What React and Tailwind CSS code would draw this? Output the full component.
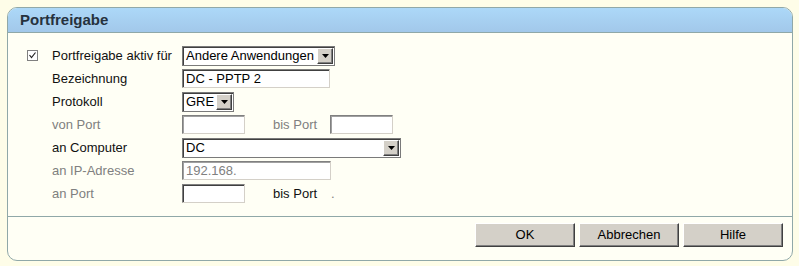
import React from "react";

const font = { fontFamily: '"Liberation Sans", Arial, sans-serif' };

function Arrow() {
  return (
    <div className="w-[16px] h-[16px] bg-[#d4d0c8] border border-t-white border-l-white border-r-[#404040] border-b-[#404040] shadow-[inset_-1px_-1px_0_#808080] flex items-center justify-center shrink-0">
      <svg width="7" height="4" viewBox="0 0 7 4">
        <polygon points="0,0 7,0 3.5,4" fill="#000" />
      </svg>
    </div>
  );
}

function Select({ value, width }) {
  return (
    <div
      className={`h-[20px] ${width} border border-[#7a7a7a] shadow-[inset_1px_1px_0_#404040] bg-white flex items-center pl-[3px] pr-[1px]`}
    >
      <span className="flex-1 text-[13px] text-black leading-none whitespace-nowrap">{value}</span>
      <Arrow />
    </div>
  );
}

function Input({ value, width, gray }) {
  return (
    <div
      className={`h-[19px] ${width} bg-white border border-t-[#808080] border-l-[#808080] border-r-[#d4d0c8] border-b-[#d4d0c8] ${
        gray ? "shadow-[inset_1px_1px_0_#a0a0a0]" : "shadow-[inset_1px_1px_0_#404040]"
      } flex items-center pl-[3px]`}
    >
      <span className={`text-[13px] leading-none whitespace-nowrap ${gray ? "text-[#808080]" : "text-black"}`}>{value}</span>
    </div>
  );
}

function Row({ label, disabled, children, check }) {
  return (
    <div className="h-[23px] flex items-center">
      <div className="w-[44px] pl-[19px] flex items-center">
        {check && (
          <svg width="11" height="11" viewBox="0 0 11 11">
            <rect x="0.5" y="0.5" width="10" height="10" fill="#fff" stroke="#808080" />
            <polyline points="2.5,5 4.5,7.5 8.5,2.5" fill="none" stroke="#222" strokeWidth="1.2" />
          </svg>
        )}
      </div>
      <div className={`w-[130px] text-[13px] ${disabled ? "text-[#808080]" : "text-[#111]"}`}>{label}</div>
      <div className="flex items-center">{children}</div>
    </div>
  );
}

function Btn({ children }) {
  return (
    <div className="w-[100px] h-[24px] bg-[#d4d0c8] border border-t-white border-l-white border-r-[#404040] border-b-[#404040] shadow-[inset_-1px_-1px_0_#808080] flex items-center justify-center text-[13px] text-black">
      {children}
    </div>
  );
}

export default function App() {
  return (
    <div className="w-[799px] h-[266px] bg-[#fefde8] pt-[7px] pl-[7px]" style={font}>
      <div className="w-[786px] h-[254px] rounded-[10px] border border-[#90a8a8] bg-[#fffff5] flex flex-col overflow-hidden">
        <div className="h-[25px] shrink-0 bg-gradient-to-b from-[#acd8f8] to-[#a2c8ea] border-b border-[#8fa8a8] flex items-center pl-[12px]">
          <span className="text-[15px] font-bold text-[#26323e]">Portfreigabe</span>
        </div>
        <div className="flex-1 pt-[11px]">
          <Row label="Portfreigabe aktiv für" check>
            <Select value="Andere Anwendungen" width="w-[153px]" />
          </Row>
          <Row label="Bezeichnung">
            <Input value="DC - PPTP 2" width="w-[148px]" />
          </Row>
          <Row label="Protokoll">
            <Select value="GRE" width="w-[52px]" />
          </Row>
          <Row label="von Port" disabled>
            <Input value="" width="w-[63px]" gray />
            <span className="ml-[28px] w-[57px] text-[13px] text-[#808080]">bis Port</span>
            <Input value="" width="w-[63px]" gray />
          </Row>
          <Row label="an Computer">
            <Select value="DC" width="w-[219px]" />
          </Row>
          <Row label="an IP-Adresse" disabled>
            <Input value="192.168." width="w-[149px]" gray />
          </Row>
          <Row label="an Port" disabled>
            <Input value="" width="w-[63px]" />
            <span className="ml-[28px] w-[58px] text-[13px] text-[#111]">bis Port</span>
            <span className="text-[13px] text-[#808080]">.</span>
          </Row>
        </div>
        <div className="h-[44px] shrink-0 border-t border-[#90a8a8] flex justify-end gap-[4px] pt-[6px] pr-[9px]">
          <Btn>OK</Btn>
          <Btn>Abbrechen</Btn>
          <Btn>Hilfe</Btn>
        </div>
      </div>
    </div>
  );
}
